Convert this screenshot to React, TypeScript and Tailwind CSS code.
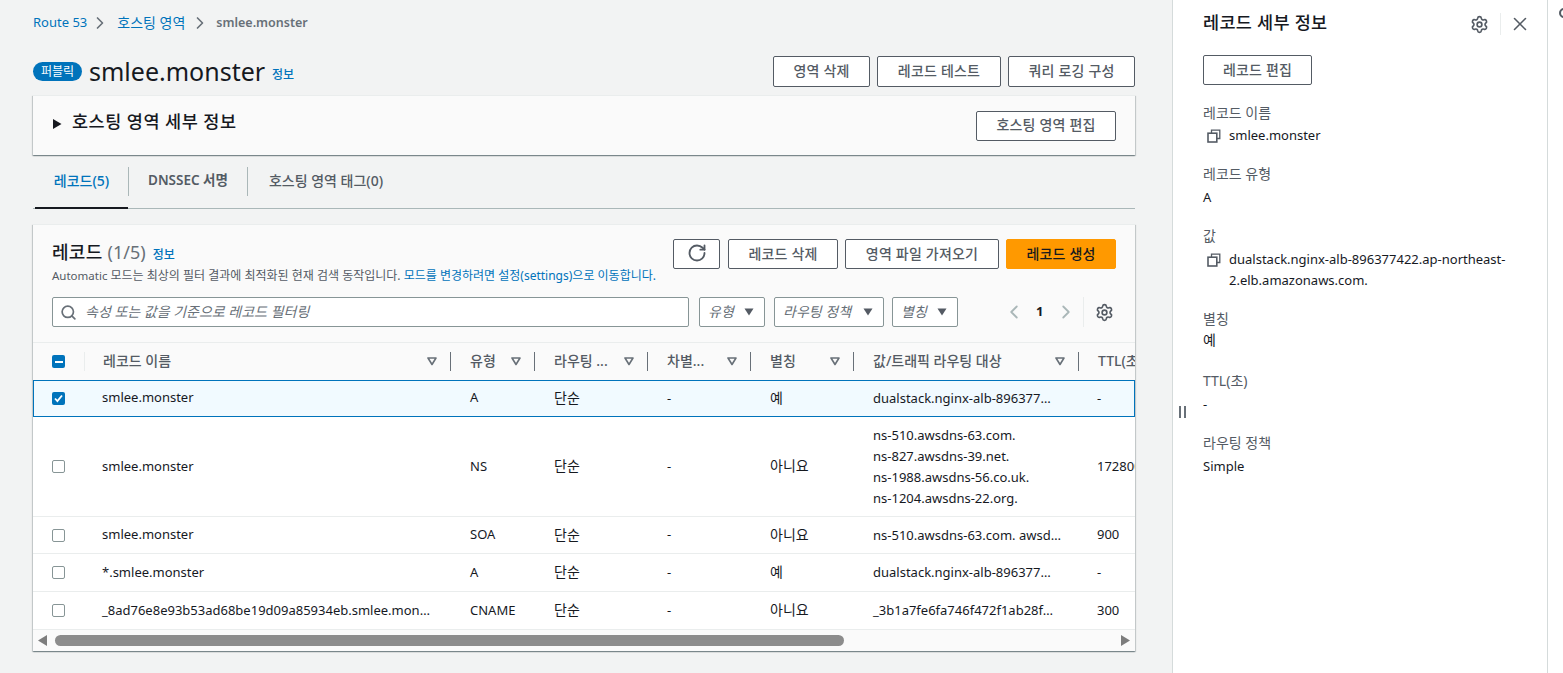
import React from "react";
import { RotateCw, Settings, Search, X, ChevronRight, ChevronLeft } from "lucide-react";

const Btn = ({ w, children, primary }: { w: string; children: React.ReactNode; primary?: boolean }) => (
  <button className={`${w} h-[31px] shrink-0 rounded-[2px] border text-[14px] font-medium tracking-[0.2px] flex items-center justify-center pb-[2px] ${primary ? "bg-[#ff9900] border-[#ff9900] text-[#16191f]" : "bg-white border-[#545b64] text-[#545b64]"}`}>
    {children}
  </button>
);

const Caret = ({ className = "" }: { className?: string }) => (
  <svg width="10" height="8" viewBox="0 0 10 8" className={className}><path d="M0.5 0.5h9L5 7.5z" fill="#545b64" /></svg>
);

const SortCaret = () => (
  <svg width="10" height="9" viewBox="0 0 10 9" className="shrink-0 mt-[3px]"><path d="M1 1h8L5 7.5z" fill="none" stroke="#687078" strokeWidth="1.6" strokeLinejoin="round" /></svg>
);

const Box = ({ state }: { state?: "on" | "mixed" }) => {
  if (state) {
    return (
      <span className="w-[13px] h-[13px] rounded-[2px] bg-[#0073bb] flex items-center justify-center">
        {state === "on" ? (
          <svg width="9" height="9" viewBox="0 0 9 9"><path d="M1 4.5l2.4 2.6L8 1.5" fill="none" stroke="#fff" strokeWidth="1.8" /></svg>
        ) : (
          <span className="w-[8px] h-[2px] bg-white" />
        )}
      </span>
    );
  }
  return <span className="w-[13px] h-[13px] rounded-[2px] border border-[#879596] bg-white" />;
};

const CopyIcon = () => (
  <svg width="14" height="14" viewBox="0 0 14 14" className="shrink-0">
    <path d="M4.5 4V1.2h8.3v8.3H10" fill="none" stroke="#545b64" strokeWidth="1.3" />
    <rect x="1" y="4.2" width="8.8" height="8.8" fill="none" stroke="#545b64" strokeWidth="1.6" />
  </svg>
);

const cols = "grid grid-cols-[52px_365px_84px_113px_103px_103px_225px_100px]";

const headers = ["레코드 이름", "유형", "라우팅 ...", "차별...", "별칭", "값/트래픽 라우팅 대상"];

type Row = { name: string; type: string; alias: string; value: string[]; ttl: string; h: string; sel?: boolean };
const rows: Row[] = [
  { name: "smlee.monster", type: "A", alias: "예", value: ["dualstack.nginx-alb-896377…"], ttl: "-", h: "h-[37px]", sel: true },
  { name: "smlee.monster", type: "NS", alias: "아니요", value: ["ns-510.awsdns-63.com.", "ns-827.awsdns-39.net.", "ns-1988.awsdns-56.co.uk.", "ns-1204.awsdns-22.org."], ttl: "172800", h: "h-[100px]" },
  { name: "smlee.monster", type: "SOA", alias: "아니요", value: ["ns-510.awsdns-63.com. awsd…"], ttl: "900", h: "h-[37px]" },
  { name: "*.smlee.monster", type: "A", alias: "예", value: ["dualstack.nginx-alb-896377…"], ttl: "-", h: "h-[38px]" },
  { name: "_8ad76e8e93b53ad68be19d09a85934eb.smlee.mon…", type: "CNAME", alias: "아니요", value: ["_3b1a7fe6fa746f472f1ab28f…"], ttl: "300", h: "h-[38px]" },
];

const Filter = ({ w, label }: { w: string; label: string }) => (
  <div className={`${w} h-[30px] shrink-0 rounded-[2px] border border-[#879596] bg-white flex items-center justify-between pl-[8px] pr-[10px]`}>
    <span className="italic text-[14px] text-[#687078] -translate-y-[1px]">{label}</span>
    <Caret />
  </div>
);

const Field = ({ label, children, mt, vmt = "mt-[3px]" }: { label: string; children: React.ReactNode; mt: string; vmt?: string }) => (
  <div className={mt}>
    <div className="text-[14px] leading-[20px] text-[#545b64]">{label}</div>
    <div className={`${vmt} text-[13px] leading-[21px] text-[#16191f]`}>{children}</div>
  </div>
);

export default function App() {
  return (
    <div className="w-[1563px] h-[673px] overflow-hidden flex bg-[#f2f3f3] text-[#16191f] font-['Noto_Sans','Noto_Sans_CJK_KR',sans-serif]">
      <main className="w-[1172px] shrink-0 pl-[33px] pr-[37px]">
        <nav className="h-[45px] flex items-center text-[13px] pt-[1px]">
          <span className="text-[#0073bb]">Route 53</span>
          <ChevronRight className="ml-[3px] mr-[7px] text-[#687078]" size={20} />
          <span className="text-[#0073bb] text-[14px] -translate-y-[1px]">호스팅 영역</span>
          <ChevronRight className="ml-[5px] mr-[6px] text-[#687078]" size={20} />
          <span className="text-[#687078] font-semibold text-[12.5px]">smlee.monster</span>
        </nav>

        <div className="h-[42px] pt-[11px] flex items-start justify-between">
          <div className="flex items-center h-[31px]">
            <span className="w-[49px] h-[19px] rounded-full bg-[#0073bb] text-white text-[12px] flex items-center justify-center">퍼블릭</span>
            <span className="ml-[7px] text-[25px] leading-[30px] -translate-y-[1px]">smlee.monster</span>
            <span className="ml-[7px] mt-[6px] text-[12px] font-medium text-[#0073bb]">정보</span>
          </div>
          <div className="flex gap-[7px]">
            <Btn w="w-[97px]">영역 삭제</Btn>
            <Btn w="w-[124px]">레코드 테스트</Btn>
            <Btn w="w-[127px]">쿼리 로깅 구성</Btn>
          </div>
        </div>

        <section className="mt-[8px] h-[60px] bg-[#fafafa] border-t border-[#eaeded] shadow-[0_1px_1px_0_rgba(0,28,36,0.3),1px_1px_1px_0_rgba(0,28,36,0.15),-1px_1px_1px_0_rgba(0,28,36,0.15)] flex items-center justify-between pl-[20px] pr-[19px]">
          <div className="flex items-center">
            <svg width="9" height="10" viewBox="0 0 9 10" className="-translate-y-[2px]"><path d="M0 0l8.5 5L0 10z" fill="#16191f" /></svg>
            <span className="ml-[10px] text-[17.5px] font-medium tracking-[0.5px] -translate-y-[4px]">호스팅 영역 세부 정보</span>
          </div>
          <Btn w="w-[140px] !h-[30px]">호스팅 영역 편집</Btn>
        </section>

        <div className="mt-[12px] h-[42px] border-b border-[#aab7b8] flex">
          <div className="w-[93px] ml-[2px] h-[42px] border-b-2 border-[#16191f] flex items-start justify-center">
            <span className="text-[#0073bb] text-[14px] font-medium h-[27px] flex items-center">레코드(5)</span>
          </div>
          <div className="w-[120px] h-[29px] border-x border-[#aab7b8] flex items-center justify-center text-[13.5px] font-semibold text-[#545b64] pb-[2px]">DNSSEC 서명</div>
          <div className="w-[156px] h-[29px] flex items-center justify-center text-[14px] font-medium text-[#545b64] pb-[2px]">호스팅 영역 태그(0)</div>
        </div>

        <section className="mt-[15px] h-[427px] bg-white border-t border-[#eaeded] overflow-hidden shadow-[0_1px_1px_0_rgba(0,28,36,0.3),1px_1px_1px_0_rgba(0,28,36,0.15),-1px_1px_1px_0_rgba(0,28,36,0.15)]">
          <div className="h-[118px] bg-[#fafafa] border-b border-[#eaeded] px-[19px] pt-[14px]">
            <div className="flex justify-between h-[45px]">
              <div>
                <div className="flex items-baseline leading-[27px]">
                  <span className="text-[18px] font-medium tracking-[0.3px]">레코드</span>
                  <span className="ml-[5px] text-[18px] text-[#687078]">(1/5)</span>
                  <span className="ml-[7px] text-[12px] font-medium text-[#0073bb]">정보</span>
                </div>
                <div className="text-[12px] leading-[15px] text-[#545b64]">
                  <span className="text-[11.5px]">Automatic</span> 모드는 최상의 필터 결과에 최적화된 현재 검색 동작입니다. <span className="text-[#0073bb]">모드를 변경하려면 설정(settings)으로 이동합니다.</span>
                </div>
              </div>
              <div className="flex">
                <Btn w="w-[47px] !h-[30px] mr-[8px]"><RotateCw size={20} strokeWidth={2.2} /></Btn>
                <Btn w="w-[110px] !h-[30px] mr-[7px]">레코드 삭제</Btn>
                <Btn w="w-[154px] !h-[30px] mr-[7px]">영역 파일 가져오기</Btn>
                <Btn w="w-[110px] !h-[30px]" primary>레코드 생성</Btn>
              </div>
            </div>
            <div className="mt-[13px] flex items-center">
              <div className="w-[637px] h-[30px] rounded-[2px] border border-[#879596] bg-white flex items-center pl-[7px]">
                <Search size={17} strokeWidth={2.4} className="text-[#687078]" />
                <span className="ml-[8px] italic text-[14px] text-[#687078] -translate-y-[1px]">속성 또는 값을 기준으로 레코드 필터링</span>
              </div>
              <div className="ml-[10px]"><Filter w="w-[66px]" label="유형" /></div>
              <div className="ml-[9px]"><Filter w="w-[110px]" label="라우팅 정책" /></div>
              <div className="ml-[8px]"><Filter w="w-[66px]" label="별칭" /></div>
              <ChevronLeft className="ml-[45px] text-[#aab7b8]" size={22} />
              <span className="ml-[11px] w-[10px] text-[13px] font-bold">1</span>
              <ChevronRight className="ml-[9px] text-[#aab7b8]" size={22} />
              <div className="ml-[6px] h-[30px] border-l border-[#eaeded] pl-[11px] flex items-center">
                <Settings size={19} className="text-[#545b64]" strokeWidth={2.1} />
              </div>
            </div>
          </div>

          <div className={`${cols} h-[37px] w-[1145px] bg-[#fafafa] text-[14px] font-medium text-[#545b64]`}>
            <div className="flex items-center pl-[19px] relative">
              <Box state="mixed" />
              <span className="absolute right-0 h-[19px] border-r border-[#eaeded]" />
            </div>
            {headers.map((h, i) => (
              <div key={h} className={`flex items-center justify-between pr-[13px] pb-[3px] relative ${i === 0 ? "pl-[18px]" : "pl-[20px]"}`}>
                <span className="whitespace-nowrap">{h}</span>
                <SortCaret />
                <span className="absolute right-[-1px] top-[9px] h-[19px] border-r border-[#687078]" />
              </div>
            ))}
            <div className="flex items-center pl-[20px] pb-[3px] whitespace-nowrap">TTL(초)</div>
          </div>

          {rows.map((r) => (
            <div key={r.name + r.type} className={`${cols} ${r.h} w-[1145px] text-[13px] ${r.sel ? "relative bg-[#f1faff] border-y border-[#0073bb]" : "border-b border-[#eaeded]"}`}>
              {r.sel && <span className="absolute left-0 top-0 bottom-0 w-[1px] bg-[#0073bb]" />}
              {r.sel && <span className="absolute left-[1101px] top-0 bottom-0 w-[1px] bg-[#0073bb]" />}
              <div className="flex items-center pl-[19px]"><Box state={r.sel ? "on" : undefined} /></div>
              <div className={`flex items-center pl-[17px] whitespace-nowrap ${r.sel ? "pb-[1px]" : ""}`}>{r.name}</div>
              <div className={`flex items-center pl-[20px] ${r.sel ? "pb-[1px]" : ""}`}>{r.type}</div>
              <div className="flex items-center pl-[20px] text-[14px] pb-[2px]">단순</div>
              <div className="flex items-center pl-[20px]">-</div>
              <div className="flex items-center pl-[20px] text-[14px] pb-[2px]">{r.alias}</div>
              <div className={`flex flex-col justify-center pl-[20px] whitespace-nowrap leading-[21px] ${r.sel ? "pb-[1px]" : ""}`}>
                {r.value.map((v) => <div key={v}>{v}</div>)}
              </div>
              <div className="flex items-center pl-[19px]">{r.ttl}</div>
            </div>
          ))}

          <div className="h-[21px] bg-[#fafafa] flex items-center pl-[5px] pr-[5px]">
            <svg width="9" height="11" viewBox="0 0 9 11"><path d="M9 0v11L0 5.5z" fill="#7d7d7d" /></svg>
            <div className="ml-[8px] w-[789px] h-[11px] rounded-full bg-[#8c8c8c]" />
            <svg width="9" height="11" viewBox="0 0 9 11" className="ml-auto"><path d="M0 0v11l9-5.5z" fill="#7d7d7d" /></svg>
          </div>
        </section>
      </main>

      <aside className="relative w-[375px] shrink-0 bg-white border-l border-[#d5dbdb] pl-[30px] pr-[14px]">
        <span className="absolute left-[6px] top-[406px] w-[7px] h-[12px] border-x-2 border-[#687078]" />
        <div className="h-[55px] flex items-start justify-between">
          <span className="mt-[10px] text-[17.5px] font-medium leading-[24px] tracking-[0.3px]">레코드 세부 정보</span>
          <div className="mt-[13px] flex items-center">
            <Settings size={19} strokeWidth={2.1} className="text-[#545b64]" />
            <span className="ml-[11px] mr-[8px] h-[22px] border-l border-[#eaeded]" />
            <X size={22} strokeWidth={1.7} className="text-[#545b64]" />
            <span className="w-[2px]" />
          </div>
        </div>
        <Btn w="w-[109px] !h-[30px]">레코드 편집</Btn>
        <Field label="레코드 이름" mt="mt-[18px]" vmt="mt-[2px]">
          <div className="flex items-center pl-[4px] gap-[8px]"><CopyIcon /><span>smlee.monster</span></div>
        </Field>
        <Field label="레코드 유형" mt="mt-[18px]">A</Field>
        <Field label="값" mt="mt-[18px]">
          <div className="flex items-start pl-[4px] gap-[8px]">
            <span className="mt-[4px]"><CopyIcon /></span>
            <span className="w-[280px]">dualstack.nginx-alb-896377422.ap-northeast-2.elb.amazonaws.com.</span>
          </div>
        </Field>
        <Field label="별칭" mt="mt-[18px]" vmt="mt-0"><span className="text-[14px]">예</span></Field>
        <Field label="TTL(초)" mt="mt-[20px]">-</Field>
        <Field label="라우팅 정책" mt="mt-[18px]">Simple</Field>
      </aside>

      <div className="flex-1 bg-white border-l border-[#d5dbdb] overflow-hidden pl-[11px] pt-[8px]">
        <span className="block w-[10px] h-[10px] rounded-full border-2 border-[#545b64]" />
      </div>
    </div>
  );
}
